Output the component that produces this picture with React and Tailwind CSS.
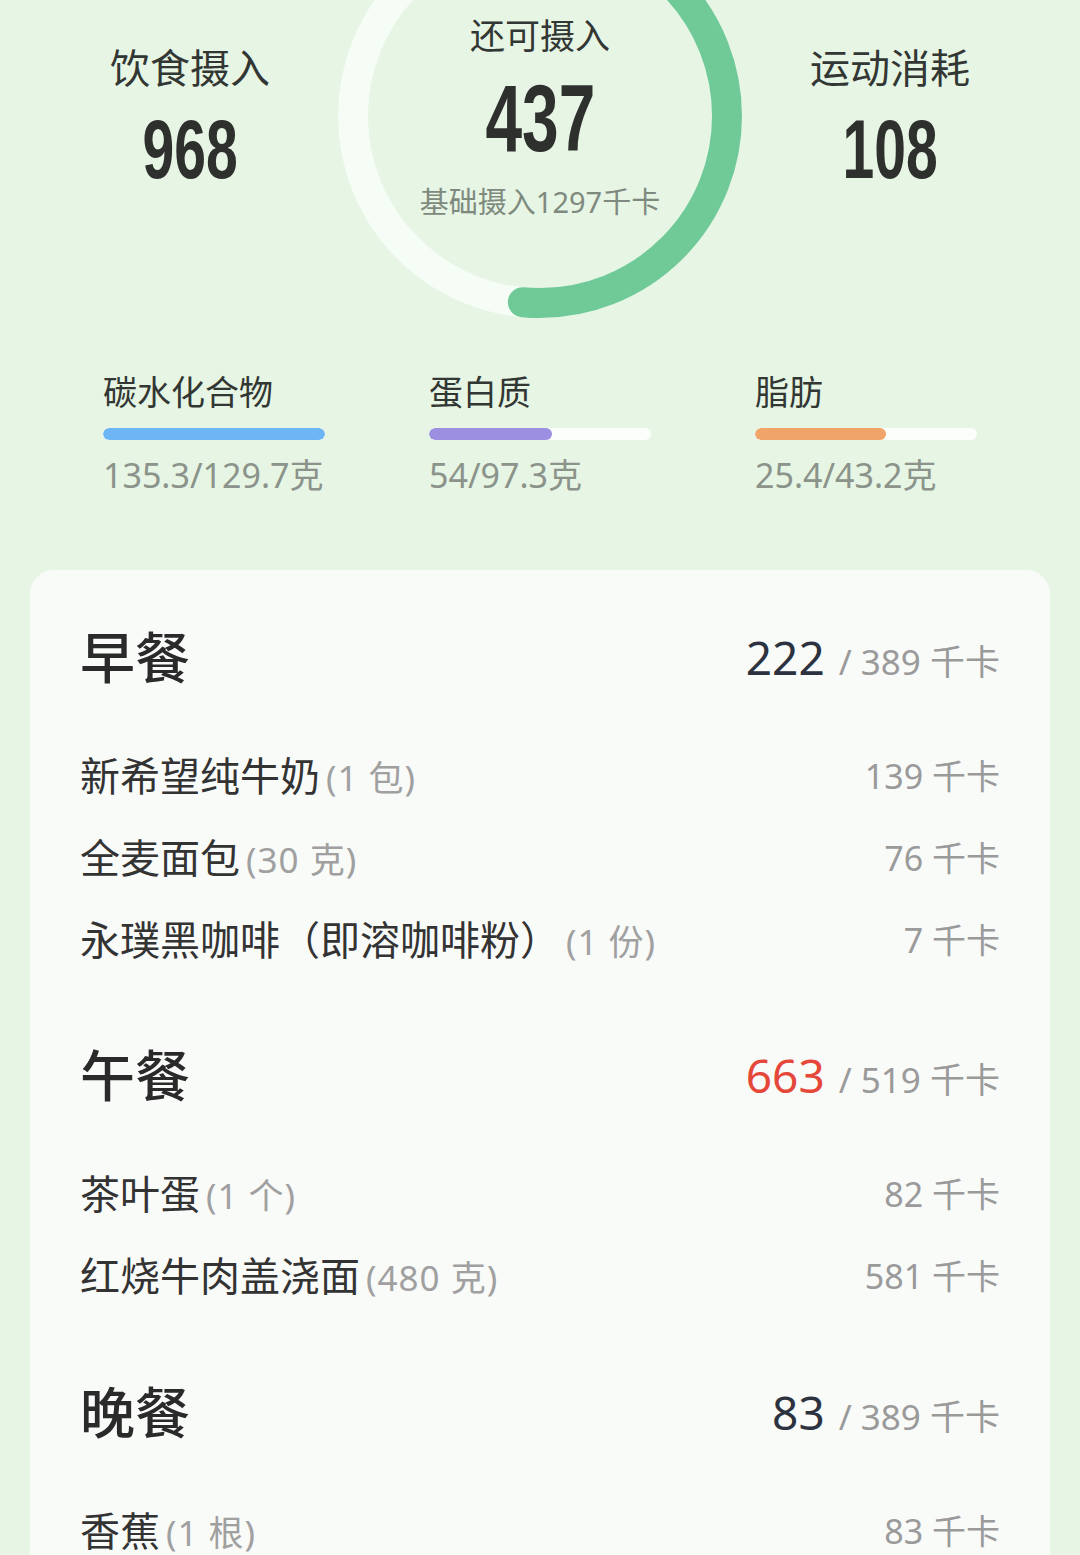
import React from "react";

const CJK = { fontFamily: '"Noto Sans", "Noto Sans CJK SC", sans-serif' };
const NUM = { fontFamily: '"Liberation Sans", Arial, sans-serif' };

function Ring() {
  const r = 187;
  const c = 2 * Math.PI * r;
  const frac = 185.2 / 360;
  return (
    <svg className="absolute left-[-50px] top-0" width="420" height="330" viewBox="0 0 420 330">
      <circle cx="210" cy="116" r={r} fill="none" stroke="#f6fcf6" strokeWidth="30" />
      <circle
        cx="210"
        cy="116"
        r={r}
        fill="none"
        stroke="#70ca98"
        strokeWidth="30"
        strokeLinecap="round"
        strokeDasharray={`${c * frac} ${c}`}
        transform="rotate(-90 210 116)"
      />
    </svg>
  );
}

function Macro({ label, value, pct, color }) {
  return (
    <div className="w-[222px] flex flex-col">
      <div className="text-[34px] leading-[42px] text-[#333733]">{label}</div>
      <div className="mt-[15px] h-[12px] rounded-full bg-[#fbfefb] overflow-hidden">
        <div className="h-full rounded-full" style={{ width: `${pct}%`, background: color }} />
      </div>
      <div className="mt-[14px] text-[34px] leading-[42px] text-[#8b938a] whitespace-nowrap">{value}</div>
    </div>
  );
}

function Item({ name, qty, kcal }) {
  return (
    <div className="h-[82px] flex items-center justify-between">
      <div className="flex items-baseline whitespace-nowrap">
        <span className="text-[40px] text-[#333333]">{name}</span>
        <span className="text-[35px] text-[#a0a0a0] ml-[6px] tracking-[1px]">{qty}</span>
      </div>
      <div className="text-[34px] text-[#9a9a9a] whitespace-nowrap">{kcal} 千卡</div>
    </div>
  );
}

function Meal({ title, eaten, target, over, items, className }) {
  return (
    <div className={className}>
      <div className="h-[66px] flex items-center justify-between">
        <div className="text-[55px] font-medium text-[#2a2a2a] leading-[66px]">{title}</div>
        <div className="flex items-baseline whitespace-nowrap">
          <span className={`text-[46px] ${over ? "text-[#e5483a]" : "text-[#2c3240]"}`}>{eaten}</span>
          <span className="text-[35px] text-[#9a9a9a] ml-[14px]">/ {target} 千卡</span>
        </div>
      </div>
      <div className="mt-[45px]">
        {items.map((it, i) => (
          <Item key={i} {...it} />
        ))}
      </div>
    </div>
  );
}

function BigNum({ children, size }) {
  return (
    <div
      className={`inline-block font-bold text-[#2e302e] ${size === "lg" ? "text-[94px] leading-[94px] scale-x-[0.7]" : "text-[84px] leading-[84px] scale-x-[0.68]"}`}
      style={NUM}
    >
      {children}
    </div>
  );
}

export default function App() {
  return (
    <div className="w-[1080px] h-[1555px] overflow-hidden bg-[#e6f5e4]" style={CJK}>
      {/* top summary */}
      <div className="relative h-[330px] flex">
        <div className="w-[380px] flex flex-col items-center pt-[44px]">
          <div className="text-[40px] leading-[48px] text-[#333733]">饮食摄入</div>
          <div className="mt-[15px]">
            <BigNum>968</BigNum>
          </div>
        </div>
        <div className="relative w-[320px] flex flex-col items-center pt-[15px]">
          <Ring />
          <div className="relative text-[35px] leading-[42px] text-[#333733]">还可摄入</div>
          <div className="relative mt-[15px]">
            <BigNum size="lg">437</BigNum>
          </div>
          <div className="relative mt-[19px] text-[29px] leading-[34px] text-[#7f8a7f] whitespace-nowrap">基础摄入1297千卡</div>
        </div>
        <div className="w-[380px] flex flex-col items-center pt-[44px]">
          <div className="text-[40px] leading-[48px] text-[#333733]">运动消耗</div>
          <div className="mt-[15px]">
            <BigNum>108</BigNum>
          </div>
        </div>
      </div>

      {/* macros */}
      <div className="mt-[41px] pl-[103px] flex gap-[104px]">
        <Macro label="碳水化合物" value="135.3/129.7克" pct={100} color="#6db5f5" />
        <Macro label="蛋白质" value="54/97.3克" pct={55.5} color="#9c8fe1" />
        <Macro label="脂肪" value="25.4/43.2克" pct={58.8} color="#f0a468" />
      </div>

      {/* meals card */}
      <div className="mt-[74px] mx-[30px] rounded-[24px] bg-[#f9fbf9] px-[50px] pt-[54px] pb-[200px]">
        <Meal
          title="早餐"
          eaten="222"
          target="389"
          items={[
            { name: "新希望纯牛奶", qty: "(1 包)", kcal: "139" },
            { name: "全麦面包", qty: "(30 克)", kcal: "76" },
            { name: "永璞黑咖啡（即溶咖啡粉）", qty: "(1 份)", kcal: "7" },
          ]}
        />
        <Meal
          className="mt-[61px]"
          title="午餐"
          eaten="663"
          target="519"
          over
          items={[
            { name: "茶叶蛋", qty: "(1 个)", kcal: "82" },
            { name: "红烧牛肉盖浇面", qty: "(480 克)", kcal: "581" },
          ]}
        />
        <Meal
          className="mt-[62px]"
          title="晚餐"
          eaten="83"
          target="389"
          items={[{ name: "香蕉", qty: "(1 根)", kcal: "83" }]}
        />
      </div>
    </div>
  );
}
